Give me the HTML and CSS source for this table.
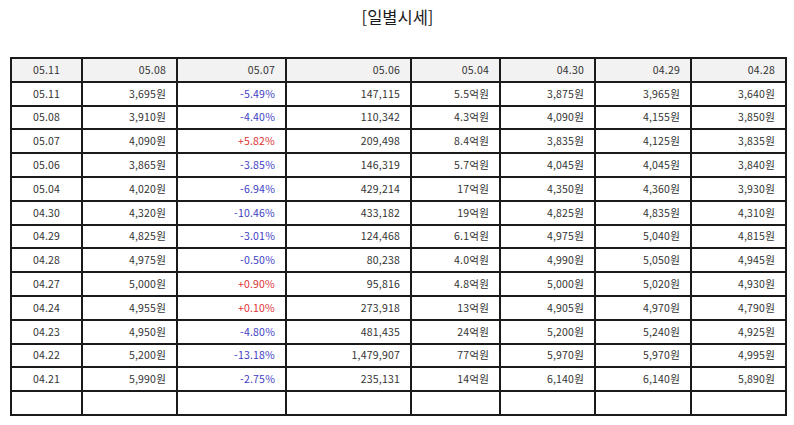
FILE: index.html
```html
<!DOCTYPE html>
<html lang="ko">
<head>
<meta charset="utf-8">
<link rel="stylesheet" href="styles.css">
</head>
<body>
<div class="wrap">
<h2 class="title">[일별시세]</h2>
<table class="grid">
<colgroup>
<col class="c1"><col class="c2"><col class="c3"><col class="c4"><col class="c5"><col class="c6"><col class="c7"><col class="c8">
</colgroup>
<thead>
<tr><th class="ctr">05.11</th><th>05.08</th><th>05.07</th><th>05.06</th><th>05.04</th><th>04.30</th><th>04.29</th><th>04.28</th></tr>
</thead>
<tbody>
<tr><td class="ctr">05.11</td><td>3,695원</td><td class="dn">-5.49%</td><td>147,115</td><td>5.5억원</td><td>3,875원</td><td>3,965원</td><td>3,640원</td></tr>
<tr><td class="ctr">05.08</td><td>3,910원</td><td class="dn">-4.40%</td><td>110,342</td><td>4.3억원</td><td>4,090원</td><td>4,155원</td><td>3,850원</td></tr>
<tr><td class="ctr">05.07</td><td>4,090원</td><td class="up">+5.82%</td><td>209,498</td><td>8.4억원</td><td>3,835원</td><td>4,125원</td><td>3,835원</td></tr>
<tr><td class="ctr">05.06</td><td>3,865원</td><td class="dn">-3.85%</td><td>146,319</td><td>5.7억원</td><td>4,045원</td><td>4,045원</td><td>3,840원</td></tr>
<tr><td class="ctr">05.04</td><td>4,020원</td><td class="dn">-6.94%</td><td>429,214</td><td>17억원</td><td>4,350원</td><td>4,360원</td><td>3,930원</td></tr>
<tr><td class="ctr">04.30</td><td>4,320원</td><td class="dn">-10.46%</td><td>433,182</td><td>19억원</td><td>4,825원</td><td>4,835원</td><td>4,310원</td></tr>
<tr><td class="ctr">04.29</td><td>4,825원</td><td class="dn">-3.01%</td><td>124,468</td><td>6.1억원</td><td>4,975원</td><td>5,040원</td><td>4,815원</td></tr>
<tr><td class="ctr">04.28</td><td>4,975원</td><td class="dn">-0.50%</td><td>80,238</td><td>4.0억원</td><td>4,990원</td><td>5,050원</td><td>4,945원</td></tr>
<tr><td class="ctr">04.27</td><td>5,000원</td><td class="up">+0.90%</td><td>95,816</td><td>4.8억원</td><td>5,000원</td><td>5,020원</td><td>4,930원</td></tr>
<tr><td class="ctr">04.24</td><td>4,955원</td><td class="up">+0.10%</td><td>273,918</td><td>13억원</td><td>4,905원</td><td>4,970원</td><td>4,790원</td></tr>
<tr><td class="ctr">04.23</td><td>4,950원</td><td class="dn">-4.80%</td><td>481,435</td><td>24억원</td><td>5,200원</td><td>5,240원</td><td>4,925원</td></tr>
<tr><td class="ctr">04.22</td><td>5,200원</td><td class="dn">-13.18%</td><td>1,479,907</td><td>77억원</td><td>5,970원</td><td>5,970원</td><td>4,995원</td></tr>
<tr><td class="ctr">04.21</td><td>5,990원</td><td class="dn">-2.75%</td><td>235,131</td><td>14억원</td><td>6,140원</td><td>6,140원</td><td>5,890원</td></tr>
<tr><td class="ctr"></td><td></td><td></td><td></td><td></td><td></td><td></td><td></td></tr>
</tbody>
</table>
</div>
</body>
</html>
```

FILE: styles.css
```css
html, body {
  margin: 0;
  padding: 0;
  background: #ffffff;
}
body {
  font-family: "Noto Sans CJK KR", "Noto Sans", sans-serif;
  color: #333333;
}
.wrap {
  padding: 0 9px 0 10px;
}
.title {
  margin: 0;
  padding-top: 5px;
  height: 57px;
  box-sizing: border-box;
  text-align: center;
  font-size: 16.5px;
  font-weight: normal;
  line-height: 24px;
  color: #1a1a1a;
}
.grid {
  width: 775px;
  table-layout: fixed;
  border-collapse: collapse;
  font-size: 10.5px;
}
.c1 { width: 71px; }
.c2 { width: 95px; }
.c3 { width: 109px; }
.c4 { width: 125px; }
.c5 { width: 89px; }
.c6 { width: 95px; }
.c7 { width: 96px; }
.c8 { width: 95px; }
.grid tr {
  height: 23.8px;
}
.grid th, .grid td {
  border: 2px solid #1a1a1a;
  padding: 0 10px 0 4px;
  text-align: right;
  font-weight: normal;
  line-height: 14px;
  letter-spacing: 0.2px;
  white-space: nowrap;
}
.grid th {
  background: #f2f2f2;
}
.grid .ctr {
  text-align: center;
  padding: 0 4px;
}
.dn { color: #4040c4; }
.up { color: #dd3333; }
```
